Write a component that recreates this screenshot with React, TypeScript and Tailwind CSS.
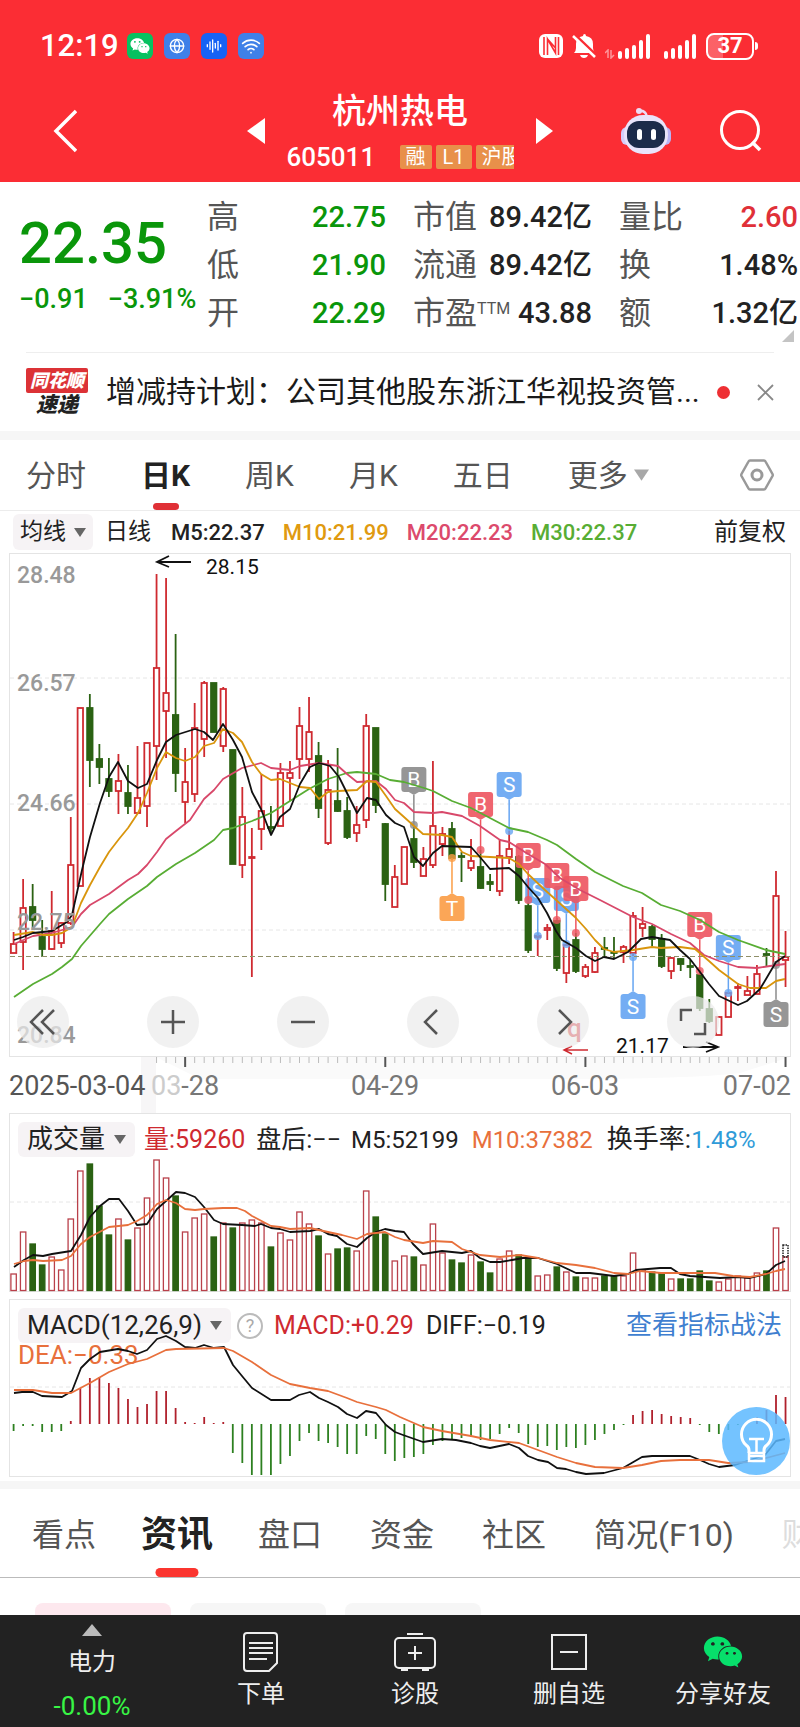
import { AudioLines, Globe, Wifi } from 'lucide-react';
import { FaWeixin } from 'react-icons/fa';
import { clsx } from 'clsx';

type Point = [number, number];
// kind, high, body top, body bottom, low
type Candle = ['u' | 'd', number, number, number, number];

const STEP = 9.53;
const xAt = (i: number) => 13.6 + STEP * i;
const toPath = (points: Point[]) => 'M' + points.map((p) => p.join(' ')).join('L');

const CANDLES: Candle[] = [
    ['u', 379, 391, 400, 400], ['u', 326, 355, 389, 417], ['d', 331, 354, 367, 375], ['d', 367, 384, 396, 404],
    ['u', 338, 378, 396, 397], ['u', 369, 370, 390, 395], ['u', 264, 312, 370, 372], ['u', 155, 155, 333, 333],
    ['d', 141, 155, 207, 234], ['d', 191, 206, 214, 231], ['d', 205, 226, 238, 244], ['u', 201, 228, 238, 261],
    ['d', 212, 240, 253, 261], ['u', 193, 245, 260, 260], ['u', 190, 190, 253, 274], ['u', 21, 115, 193, 227],
    ['u', 25, 140, 158, 205], ['d', 81, 162, 220, 239], ['u', 195, 229, 249, 270], ['u', 150, 175, 241, 249],
    ['u', 128, 130, 186, 204], ['d', 130, 130, 179, 179], ['u', 134, 136, 193, 199], ['d', 197, 197, 311, 311],
    ['u', 234, 264, 312, 325], ['u', 275, 304, 305, 424], ['u', 221, 258, 276, 297], ['d', 253, 274, 275, 282],
    ['u', 210, 220, 273, 273], ['u', 208, 220, 225, 248], ['u', 154, 173, 206, 226], ['u', 144, 179, 206, 219],
    ['d', 189, 203, 255, 265], ['u', 207, 237, 290, 292], ['d', 195, 248, 258, 259], ['d', 244, 258, 284, 286],
    ['u', 253, 272, 280, 289], ['u', 161, 173, 267, 275], ['d', 175, 175, 252, 260], ['d', 270, 271, 331, 348],
    ['u', 312, 324, 354, 354], ['u', 294, 294, 331, 331], ['d', 274, 286, 309, 315], ['u', 294, 306, 323, 323],
    ['u', 208, 273, 312, 315], ['u', 274, 281, 291, 303], ['d', 269, 276, 305, 307], ['d', 299, 303, 304, 329],
    ['u', 286, 308, 315, 318], ['d', 297, 314, 335, 336], ['d', 321, 329, 331, 338], ['u', 287, 303, 338, 343],
    ['u', 278, 296, 304, 311], ['d', 302, 304, 347, 351], ['d', 347, 353, 397, 400], ['u', 380, 383, 384, 403],
    ['u', 371, 375, 377, 387], ['d', 365, 368, 415, 418], ['u', 391, 392, 420, 430], ['d', 380, 387, 418, 420],
    ['u', 411, 414, 423, 425], ['u', 394, 400, 419, 420], ['d', 384, 395, 396, 404], ['d', 384, 399, 400, 405],
    ['u', 392, 394, 399, 410], ['u', 359, 363, 400, 403], ['u', 354, 371, 375, 384], ['d', 372, 374, 386, 393],
    ['d', 381, 386, 413, 415], ['u', 404, 405, 418, 426], ['d', 405, 406, 411, 418], ['d', 407, 413, 414, 425],
    ['d', 417, 422, 455, 458], ['d', 446, 456, 468, 470], ['u', 463, 464, 482, 482], ['u', 439, 440, 464, 464],
    ['u', 430, 434, 435, 448], ['u', 423, 438, 442, 442], ['u', 412, 421, 441, 441], ['d', 395, 401, 402, 413],
    ['u', 318, 343, 412, 412], ['u', 378, 404, 407, 434],
];

const MA5: Point[] = [
    [14, 387], [23, 384], [33, 380], [52, 378], [62, 372], [67, 369], [72, 362], [82, 317], [90, 284], [100, 250],
    [109, 224], [118, 209], [128, 228], [138, 235], [147, 231], [157, 207], [166, 189], [176, 182], [195, 176],
    [204, 179], [213, 187], [223, 171], [233, 187], [242, 204], [252, 239], [261, 256], [271, 282], [280, 264],
    [290, 256], [300, 231], [310, 214], [319, 210], [330, 213], [339, 224], [357, 260], [367, 245], [376, 247],
    [386, 262], [395, 270], [404, 274], [414, 304], [423, 313], [433, 300], [442, 293], [471, 294], [480, 304],
    [490, 316], [509, 315], [519, 323], [528, 334], [538, 345], [547, 360], [556, 378], [562, 387], [576, 395],
    [586, 403], [595, 408], [604, 404], [614, 406], [628, 399], [641, 386], [652, 384], [670, 387], [680, 397],
    [690, 406], [700, 419], [709, 431], [719, 443], [738, 452], [747, 448], [760, 436], [766, 426], [776, 409], [785, 403],
];
const MA10: Point[] = [
    [14, 382], [33, 379], [43, 382], [52, 382], [62, 380], [72, 374], [81, 350], [90, 332], [100, 314], [109, 299],
    [119, 286], [128, 275], [138, 260], [147, 240], [157, 215], [166, 199], [176, 205], [185, 208], [195, 204],
    [204, 193], [214, 190], [223, 176], [233, 180], [242, 189], [252, 209], [261, 221], [271, 227], [280, 226],
    [290, 230], [300, 234], [310, 235], [319, 246], [328, 239], [338, 238], [357, 237], [367, 228], [376, 229],
    [386, 243], [395, 256], [404, 264], [414, 273], [423, 281], [442, 282], [452, 284], [462, 299], [471, 303],
    [509, 305], [519, 311], [528, 321], [545, 337], [555, 346], [576, 365], [586, 376], [595, 387], [604, 396],
    [614, 399], [633, 397], [652, 394], [661, 395], [680, 394], [695, 396], [709, 408], [719, 417], [738, 431],
    [750, 435], [766, 435], [776, 428], [785, 426],
];
const MA20: Point[] = [
    [14, 391], [33, 383], [52, 380], [72, 374], [81, 361], [90, 352], [109, 341], [128, 327], [138, 321], [147, 312],
    [157, 299], [166, 286], [176, 278], [190, 267], [204, 246], [214, 237], [223, 226], [242, 215], [261, 210],
    [271, 215], [290, 217], [300, 213], [319, 210], [338, 213], [347, 221], [357, 229], [376, 228], [386, 236],
    [395, 247], [404, 250], [414, 259], [433, 260], [442, 259], [462, 263], [480, 273], [500, 287], [509, 289],
    [528, 301], [545, 311], [560, 325], [580, 337], [600, 347], [633, 364], [652, 371], [671, 381], [690, 390],
    [704, 402], [719, 408], [738, 414], [757, 415], [770, 413], [785, 411],
];
const MA30: Point[] = [
    [14, 444], [33, 431], [52, 421], [62, 414], [72, 406], [81, 393], [100, 371], [109, 361], [128, 346], [147, 333],
    [157, 324], [176, 311], [195, 300], [214, 287], [223, 277], [233, 275], [252, 268], [271, 260], [290, 248],
    [309, 236], [328, 226], [347, 220], [357, 219], [376, 221], [390, 227], [404, 229], [424, 235], [433, 238],
    [452, 248], [471, 255], [490, 265], [509, 275], [528, 279], [547, 287], [557, 292], [576, 306], [595, 319],
    [623, 333], [642, 340], [661, 352], [680, 358], [700, 367], [719, 379], [738, 387], [766, 397], [785, 401],
];

const VOLUMES = [
    17, 59, 47, 26, 34, 21, 72, 120, 127, 85, 56, 72, 51, 63, 93, 131, 113, 95, 59, 73, 77, 54, 68, 63, 68, 71, 68, 44,
    58, 51, 79, 67, 55, 37, 42, 43, 40, 100, 74, 57, 30, 35, 34, 26, 67, 38, 31, 28, 36, 29, 18, 32, 40, 36, 32, 15, 16,
    24, 19, 14, 13, 13, 15, 15, 15, 38, 21, 19, 18, 12, 12, 12, 20, 10, 9, 12, 15, 13, 18, 20, 63, 34,
];
const VOL5: Point[] = [
    [14, 154], [24, 147], [33, 142], [43, 143], [52, 141], [71, 138], [81, 122], [90, 104], [100, 93], [109, 86],
    [119, 86], [128, 98], [137, 112], [147, 111], [157, 96], [166, 88], [176, 79], [185, 80], [195, 84], [204, 94],
    [214, 107], [223, 111], [242, 112], [255, 113], [261, 111], [271, 115], [280, 116], [290, 119], [310, 118],
    [319, 116], [328, 121], [337, 123], [347, 131], [357, 134], [367, 125], [376, 119], [385, 116], [395, 118],
    [404, 119], [413, 131], [423, 141], [442, 138], [462, 140], [471, 138], [480, 145], [490, 149], [500, 149],
    [512, 147], [523, 145], [538, 145], [557, 151], [576, 160], [590, 160], [614, 163], [628, 161], [636, 157],
    [660, 155], [671, 155], [680, 161], [690, 163], [720, 165], [738, 164], [750, 165], [766, 161], [776, 152], [785, 148],
];
const VOL10: Point[] = [
    [14, 151], [24, 148], [33, 147], [43, 148], [62, 147], [71, 143], [81, 131], [90, 124], [109, 114], [128, 112],
    [137, 108], [147, 102], [157, 91], [166, 87], [176, 90], [185, 96], [195, 97], [204, 96], [223, 95], [237, 95],
    [245, 98], [252, 103], [271, 113], [280, 114], [290, 116], [310, 115], [328, 119], [342, 122], [357, 126],
    [367, 121], [385, 119], [395, 124], [404, 127], [423, 130], [433, 128], [452, 129], [462, 136], [480, 142],
    [500, 144], [520, 142], [538, 145], [557, 150], [576, 152], [595, 155], [614, 160], [628, 161], [640, 158],
    [661, 160], [715, 160], [733, 163], [750, 164], [766, 161], [776, 158], [785, 156],
];

const MACD = [
    -7, -2, -2, -8, -8, -7, 3, 36, 46, 47, 41, 36, 25, 17, 20, 33, 33, 16, 2, 1, 7, 1, 2, -29, -39, -51, -51, -51, -40,
    -32, -17, -9, -17, -19, -23, -30, -30, -12, -15, -30, -37, -34, -33, -30, -21, -17, -15, -14, -13, -16, -15, -10, -4,
    -9, -20, -23, -22, -26, -23, -24, -21, -16, -10, -6, -1, 9, 13, 14, 10, 8, 7, 6, -1, -8, -10, -6, -1, 2, 7, 14, 29, 27,
];
const DIFF: Point[] = [
    [14, 94], [22, 93], [33, 93], [42, 97], [62, 98], [72, 92], [81, 69], [90, 60], [100, 53], [118, 50], [128, 52],
    [137, 55], [147, 51], [157, 40], [166, 37], [176, 42], [185, 48], [195, 49], [204, 46], [214, 49], [224, 48],
    [233, 66], [242, 77], [252, 89], [271, 101], [290, 101], [299, 96], [310, 93], [319, 99], [328, 103], [338, 108],
    [347, 115], [357, 119], [366, 112], [376, 114], [386, 126], [395, 133], [403, 136], [423, 143], [442, 140],
    [456, 141], [471, 144], [480, 147], [490, 149], [509, 145], [519, 149], [528, 157], [538, 161], [548, 163],
    [557, 169], [566, 170], [576, 173], [586, 175], [604, 174], [623, 169], [642, 158], [652, 157], [661, 157],
    [690, 157], [700, 161], [709, 165], [719, 168], [735, 166], [750, 161], [765, 156], [776, 142], [785, 140],
];
const DEA: Point[] = [
    [14, 91], [33, 91], [52, 94], [71, 94], [90, 84], [109, 73], [128, 65], [147, 60], [166, 51], [176, 50], [224, 49],
    [233, 52], [252, 63], [271, 76], [290, 85], [310, 89], [328, 92], [347, 99], [357, 103], [376, 108], [386, 111],
    [400, 118], [423, 128], [442, 132], [471, 137], [490, 141], [519, 144], [538, 151], [557, 158], [576, 164],
    [595, 168], [623, 169], [642, 166], [661, 162], [680, 161], [709, 161], [728, 164], [750, 163], [770, 158], [785, 154],
];

// Trade markers: candle index, letter, colour, top of the flag, y of the dot
const MARKERS: [number, string, string, number, number][] = [
    [42, 'B', '#8b8b8b', 214, 272],
    [46, 'T', '#fb9d45', 343, 305],
    [49, 'B', '#ee5560', 239, 297],
    [52, 'S', '#66a5f2', 219, 278],
    [55, 'S', '#66a5f2', 325, 383],
    [54, 'B', '#ee5560', 290, 347],
    [58, 'S', '#66a5f2', 333, 391],
    [57, 'B', '#ee5560', 310, 367],
    [59, 'B', '#ee5560', 323, 380],
    [65, 'S', '#66a5f2', 441, 404],
    [72, 'B', '#ee5560', 359, 418],
    [75, 'S', '#66a5f2', 382, 440],
    [80, 'S', '#8b8b8b', 449, 412],
];

const RED = '#cf2a30';
const GREEN = '#2b6213';

function CaretDown({ className }: { className?: string }) {
    return (
        <svg viewBox="0 0 12 9" className={className} aria-hidden="true">
            <path d="M0 0h12L6 9z" fill="currentColor" />
        </svg>
    );
}

function IndicatorSelect({ label, className }: { label: string; className?: string }) {
    return (
        <label className={clsx('flex items-center rounded-md bg-[#f6f3f5] text-[#222]', className)}>
            <select aria-label={label} className="appearance-none bg-transparent outline-none">
                <option>{label}</option>
            </select>
            <CaretDown className="ml-2 h-[9px] w-3 text-[#666]" />
        </label>
    );
}

function Signal() {
    return (
        <svg viewBox="0 0 32 26" className="h-[26px] w-8" aria-hidden="true">
            {[8, 11, 14, 19, 25].map((h, i) => (
                <rect key={h} x={i * 7} y={26 - h} width="4" height={h} rx="2" fill="#fff" />
            ))}
        </svg>
    );
}

function Header() {
    return (
        <header className="h-[182px] bg-[#fb2d34] text-white">
            <div className="flex items-center pt-[28px] pr-[42px] pl-[40px]">
                <span className="text-[31px] leading-9 font-medium">12:19</span>
                <div className="ml-2 flex gap-[11px]">
                    <span className="flex size-[26px] items-center justify-center rounded-md bg-[#07c160]">
                        <FaWeixin className="size-5" />
                    </span>
                    <span className="flex size-[26px] items-center justify-center rounded-md bg-[#3f80e8]">
                        <Globe className="size-4" />
                    </span>
                    <span className="flex size-[26px] items-center justify-center rounded-md bg-[#1662f5]">
                        <AudioLines className="size-4" />
                    </span>
                    <span className="flex size-[26px] items-center justify-center rounded-md bg-[#3f80e8]">
                        <Wifi className="size-5" />
                    </span>
                </div>
                <div className="ml-auto flex items-center">
                    <svg viewBox="0 0 24 24" className="size-6" aria-hidden="true">
                        <rect width="24" height="24" rx="6" fill="#fff" />
                        <path d="M5 3v18M8.500 21V5l8 14V3M19.500 3v18M8.500 5l8 9" stroke="#fb2d34" strokeWidth="1.600" fill="none" />
                    </svg>
                    <svg viewBox="0 0 26 26" className="ml-2 size-[26px]" aria-hidden="true">
                        <path d="M3 20q2-2 2-5v-4q0-7 7-8 0-2 1.500-2T15 3q7 1 7 8v4q0 3 2 5zM9 22h8q-1 3-4 3t-4-3z" fill="#fff" />
                        <path d="M3 1l22 21" stroke="#fb2d34" strokeWidth="3" />
                        <path d="M2 3l22 21" stroke="#fff" strokeWidth="2.500" />
                    </svg>
                    <svg viewBox="0 0 10 10" className="mt-4 mr-[3px] ml-2 size-[10px] opacity-50" aria-hidden="true">
                        <path d="M3 9V1L0 4M6 1v8l3-3" stroke="#fff" strokeWidth="1.500" fill="none" />
                    </svg>
                    <Signal />
                    <span className="ml-[14px]">
                        <Signal />
                    </span>
                    <span className="ml-[10px] flex h-[27px] w-12 items-center justify-center rounded-lg border-2 border-white bg-linear-to-r from-white/25 from-35% to-transparent to-35% text-[22px] leading-none font-bold">
                        37
                    </span>
                    <span className="ml-px h-2 w-[3px] rounded-r bg-white" />
                </div>
            </div>

            <div className="mt-[27px] grid grid-cols-[1fr_auto_1fr] items-center">
                <button type="button" aria-label="返回" className="ml-[53px] w-fit">
                    <svg viewBox="0 0 24 44" className="h-11 w-6">
                        <path d="M23 2L3 22l20 20" fill="none" stroke="#fff" strokeWidth="3.500" />
                    </svg>
                </button>
                <div className="flex items-center gap-[22px]">
                    <button type="button" aria-label="上一只">
                        <svg viewBox="0 0 18 26" className="h-[26px] w-[18px]">
                            <path d="M18 0v26L0 13z" fill="#fff" />
                        </svg>
                    </button>
                    <div className="w-[227px]">
                        <h1 className="text-center text-[34px] leading-10 font-medium">杭州热电</h1>
                        <div className="mt-3 flex h-7 items-center justify-between overflow-hidden">
                            <span className="text-[26px] leading-7 font-medium">605011</span>
                            <div className="flex w-[114px] gap-1 overflow-hidden text-[20px] leading-6 whitespace-nowrap">
                                <span className="shrink-0 rounded-xs bg-[#e8904a] px-[6px]">融</span>
                                <span className="shrink-0 rounded-xs bg-[#e8904a] px-[7px]">L1</span>
                                <span className="shrink-0 rounded-xs bg-[#e8904a] px-[6px]">沪股通</span>
                            </div>
                        </div>
                    </div>
                    <button type="button" aria-label="下一只">
                        <svg viewBox="0 0 18 26" className="h-[26px] w-[18px]">
                            <path d="M0 0v26l17-13z" fill="#fff" />
                        </svg>
                    </button>
                </div>
                <div className="mr-[38px] flex items-center justify-end gap-[48px]">
                    <button type="button" aria-label="智能助手">
                        <svg viewBox="0 0 52 48" className="h-12 w-[52px]">
                            <path d="M19 4q7-1 8 6" fill="none" stroke="#eddcf5" strokeWidth="2.500" />
                            <circle cx="19" cy="4" r="3" fill="#eddcf5" />
                            <rect x="1" y="20" width="12" height="18" rx="6" fill="#d5cdfa" />
                            <rect x="39" y="20" width="12" height="18" rx="6" fill="#b9b4f5" />
                            <rect x="4" y="8" width="44" height="39" rx="19" fill="#e9e4fb" />
                            <rect x="7" y="14" width="38" height="27" rx="12" fill="#1c2b4a" />
                            <rect x="17" y="22" width="5" height="11" rx="2.500" fill="#fff" />
                            <rect x="31" y="22" width="5" height="11" rx="2.500" fill="#fff" />
                        </svg>
                    </button>
                    <button type="button" aria-label="搜索">
                        <svg viewBox="0 0 42 42" className="size-[42px]">
                            <circle cx="20" cy="20" r="18.500" fill="none" stroke="#fff" strokeWidth="3" />
                            <path d="M32 32l8 8" stroke="#fff" strokeWidth="3.500" />
                        </svg>
                    </button>
                </div>
            </div>
        </header>
    );
}

function Stat({ label, value, tone = 'text-[#222]', sup }: { label: string; value: string; tone?: string; sup?: string }) {
    return (
        <div className="flex items-center justify-between">
            <dt className="flex text-[32px] text-[#555]">
                {label}
                {sup && <sup className="top-0 mt-[10px] text-[16px] leading-5">{sup}</sup>}
            </dt>
            <dd className={clsx('text-[29px] font-medium', tone)}>{value}</dd>
        </div>
    );
}

function Quote() {
    return (
        <section className="relative flex h-[170px] pt-[11px] pr-[2px] pl-[19px]">
            <div className="w-[188px] shrink-0 whitespace-nowrap text-[#0a960a]">
                <div className="mt-[18px] text-[58px] leading-[64px] font-medium">22.35</div>
                <div className="mt-[6px] flex gap-5 text-[27px] leading-9 font-medium">
                    <span>−0.91</span>
                    <span>−3.91%</span>
                </div>
            </div>
            <dl className="grid flex-1 grid-cols-3 content-start gap-x-[27px] leading-[48px] whitespace-nowrap">
                <Stat label="高" value="22.75" tone="text-[#0a960a]" />
                <Stat label="市值" value="89.42亿" />
                <Stat label="量比" value="2.60" tone="text-[#e03038]" />
                <Stat label="低" value="21.90" tone="text-[#0a960a]" />
                <Stat label="流通" value="89.42亿" />
                <Stat label="换" value="1.48%" />
                <Stat label="开" value="22.29" tone="text-[#0a960a]" />
                <Stat label="市盈" sup="TTM" value="43.88" />
                <Stat label="额" value="1.32亿" />
            </dl>
            <svg viewBox="0 0 12 12" className="absolute right-[6px] bottom-[10px] size-3" aria-hidden="true">
                <path d="M12 0v12H0z" fill="#c4c4c4" />
            </svg>
        </section>
    );
}

function News() {
    return (
        <section className="mr-[26px] ml-[26px] flex h-[79px] items-center border-t border-[#eee]">
            <div className="w-[62px] shrink-0 text-center font-black italic">
                <div className="rounded-xs bg-[#dc3236] text-[18px] leading-[25px] text-white">同花顺</div>
                <div className="text-[21px] leading-6 text-[#222]">速递</div>
            </div>
            <a href="#news" className="ml-[18px] flex-1 truncate text-[30px] leading-10 text-[#1a1a1a]">
                增减持计划：公司其他股东浙江华视投资管...
            </a>
            <span className="size-[13px] shrink-0 rounded-full bg-[#ee2f33]" />
            <button type="button" aria-label="关闭" className="ml-[27px]">
                <svg viewBox="0 0 17 17" className="size-[17px]">
                    <path d="M1 1l15 15M16 1L1 16" stroke="#888" strokeWidth="1.800" />
                </svg>
            </button>
        </section>
    );
}

function PeriodTabs() {
    return (
        <nav className="flex h-[71px] items-center border-b border-[#ececec] pr-[26px] pl-[26px] text-[30px] text-[#555]">
            <div className="flex h-full gap-[55px]">
                {['分时', '日K', '周K', '月K', '五日'].map((tab) => (
                    <button key={tab} type="button" className={clsx('relative', tab === '日K' && 'font-bold text-[#222]')}>
                        {tab}
                        {tab === '日K' && (
                            <span className="absolute bottom-0 left-1/2 h-[7px] w-[26px] -translate-x-1/2 rounded bg-[#e03036]" />
                        )}
                    </button>
                ))}
                <button type="button" className="flex items-center gap-[6px]">
                    更多
                    <CaretDown className="h-3 w-[15px] text-[#a8a8a8]" />
                </button>
            </div>
            <button type="button" aria-label="图表设置" className="ml-auto">
                <svg viewBox="0 0 34 32" className="h-8 w-[34px]" fill="none" stroke="#999" strokeWidth="2.500">
                    <path d="M10 1.500h14q1 0 1.500 1l7 12.500q.5 1 0 2l-7 12.500q-.5 1-1.500 1H10q-1 0-1.500-1L1.500 17q-.5-1 0-2l7-12.500q.5-1 1.500-1z" />
                    <circle cx="17" cy="16" r="5" strokeWidth="3" />
                </svg>
            </button>
        </nav>
    );
}

function MaBar() {
    return (
        <div className="flex h-[42px] items-center pr-[14px] pl-[13px] text-[22px] font-medium whitespace-nowrap">
            <IndicatorSelect label="均线" className="h-9 px-[7px] text-[23px] font-normal" />
            <span className="ml-3 text-[23px] font-normal">日线</span>
            <div className="ml-5 flex gap-[18px]">
                <span>M5:22.37</span>
                <span className="text-[#e09a10]">M10:21.99</span>
                <span className="text-[#dc4a6c]">M20:22.23</span>
                <span className="text-[#58ad34]">M30:22.37</span>
            </div>
            <span className="ml-auto text-[24px] font-normal">前复权</span>
        </div>
    );
}

function Line({ points, color }: { points: Point[]; color: string }) {
    return <path d={toPath(points)} fill="none" stroke={color} strokeWidth="1.800" strokeLinejoin="round" />;
}

function Marker({ data }: { data: (typeof MARKERS)[number] }) {
    const [index, letter, color, top, dot] = data;
    const x = xAt(index);
    const below = top > dot;
    const tip = below ? top - 3 : top + 28;
    const edge = below ? top : top + 25;
    return (
        <g>
            <path d={`M${x} ${tip}V${dot}`} stroke={color} strokeWidth="1.500" />
            <circle cx={x} cy={dot} r="4" fill={color} opacity="0.8" />
            <g opacity="0.9">
                <rect x={x - 12.5} y={top} width="25" height="25" rx="3" fill={color} />
                <path d={`M${x - 5} ${edge}L${x} ${tip}L${x + 5} ${edge}z`} fill={color} />
            </g>
            <text x={x} y={top + 20} textAnchor="middle" fontSize="21" fill="#fff">
                {letter}
            </text>
        </g>
    );
}

const GRID = [125, 251, 377];
const PRICES: [string, number][] = [['28.48', 30], ['26.57', 138], ['24.66', 258], ['22.75', 377], ['20.84', 490]];

function PriceChart() {
    const buttons = [
        { label: '最早', d: 'M26 14L14 26l12 12M37 14L25 26l12 12' },
        { label: '放大', d: 'M14 26h24M26 14v24' },
        { label: '缩小', d: 'M14 26h24' },
        { label: '左移', d: 'M30 14L18 26l12 12' },
        { label: '右移', d: 'M22 14l12 12-12 12' },
        { label: '全屏', d: 'M25 14H14v11M27 38h11V27' },
    ];
    return (
        <section className="relative">
            <svg viewBox="0 0 800 560" className="block w-full">
                <rect x="9.500" y="0.500" width="781" height="503" fill="#fff" stroke="#e4e4e4" />
                {GRID.map((y) => (
                    <path key={y} d={`M10 ${y}H790`} stroke="#e6e6e6" strokeDasharray="4 3" />
                ))}
                <rect x="141" y="504" width="15" height="56" fill="#f7f6f7" />
                <path d="M156 504H790L740 520Q690 526 560 526H200z" fill="#fafafa" />

                {CANDLES.map(([kind, high, top, bottom, low], i) => {
                    const x = xAt(i);
                    const color = kind === 'u' ? RED : GREEN;
                    return (
                        <g key={i} stroke={color} strokeWidth="1.800">
                            {high < top && <path d={`M${x} ${high}V${top}`} />}
                            {low > bottom && <path d={`M${x} ${bottom}V${low}`} />}
                            <rect x={x - 2.7} y={top} width="5.4" height={Math.max(bottom - top, 1)} fill={kind === 'u' ? '#fff' : color} />
                        </g>
                    );
                })}
                {MARKERS.map((m, i) => (
                    <Marker key={i} data={m} />
                ))}
                <path d="M10 403.500H790" stroke="#8f8f68" strokeDasharray="5 3" />
                <Line points={MA30} color="#58ad34" />
                <Line points={MA20} color="#d8486a" />
                <Line points={MA10} color="#d9950c" />
                <Line points={MA5} color="#111" />

                {PRICES.map(([price, y]) => (
                    <text key={price} x="17" y={y} fontSize="23" fontWeight="500" fill="#999">
                        {price}
                    </text>
                ))}
                <path d="M191 9H157M169 3L157 9l12 5" fill="none" stroke="#111" strokeWidth="1.800" />
                <text x="206" y="21" fontSize="21" fill="#111">28.15</text>
                <text x="616" y="500" fontSize="21" fill="#111">21.17</text>
                <path d="M683 494h35M706 489l12 5-12 5" fill="none" stroke="#111" strokeWidth="1.800" />
                <text x="567" y="484" fontSize="26" fontWeight="500" fill="#d9262c">q</text>
                <path d="M588 497h-24M572 493l-8 4 8 4" fill="none" stroke="#cf2a30" strokeWidth="1.500" />

                {CANDLES.map((_, i) => {
                    const major = i === 18 || i === 39 || i === 60 || i === 81;
                    return i > 14 && (
                        <path key={i} d={`M${xAt(i)} 504V${major ? 514 : 510}`} stroke={major ? '#555' : '#bbb'} strokeWidth={major ? 2 : 1} />
                    );
                })}
                <g fontSize="27" fill="#777">
                    <text x="9" y="542" fill="#555">2025-03-04</text>
                    <text x="151" y="542"><tspan fill="#ccc">03</tspan>-28</text>
                    <text x="385" y="542" textAnchor="middle">04-29</text>
                    <text x="585" y="542" textAnchor="middle">06-03</text>
                    <text x="791" y="542" textAnchor="end">07-02</text>
                </g>
            </svg>
            <div className="absolute top-[443px] left-[17px] flex gap-[78px]">
                {buttons.map(({ label, d }) => (
                    <button key={label} type="button" aria-label={label} className="size-[52px] rounded-full bg-[#ebebeb]/70">
                        <svg viewBox="0 0 52 52" className="size-full">
                            <path d={d} fill="none" stroke="#555" strokeWidth="2.500" />
                        </svg>
                    </button>
                ))}
            </div>
        </section>
    );
}

function VolumeChart() {
    return (
        <section className="grid">
            <svg viewBox="0 0 800 186" className="col-start-1 row-start-1 block w-full">
                <rect x="9.500" y="0.500" width="781" height="178" fill="#fff" stroke="#e4e4e4" />
                <path d="M10 89H790" stroke="#e6e6e6" strokeDasharray="4 3" />
                {VOLUMES.map((v, i) => {
                    const up = CANDLES[i][0] === 'u';
                    return (
                        <rect
                            key={i}
                            x={xAt(i) - 2.7}
                            y={178 - v}
                            width="5.4"
                            height={v - 0.5}
                            fill={up ? '#fff' : GREEN}
                            stroke={up ? '#b9404a' : GREEN}
                            strokeWidth="1.300"
                        />
                    );
                })}
                <rect x="783" y="132" width="5" height="12" fill="none" stroke="#222" strokeWidth="1.500" strokeDasharray="1.500 1" />
                <Line points={VOL5} color="#111" />
                <Line points={VOL10} color="#e8703c" />
            </svg>
            <div className="col-start-1 row-start-1 mt-[9px] ml-[18px] flex h-[35px] items-center self-start text-[24px] whitespace-nowrap">
                <IndicatorSelect label="成交量" className="h-full px-[9px] text-[26px]" />
                <span className="ml-[9px] text-[25px] text-[#cf2a30]">量:59260</span>
                <span className="ml-[11px] text-[25px]">盘后:−−</span>
                <span className="ml-[10px]">M5:52199</span>
                <span className="ml-[13px] text-[#e8703c]">M10:37382</span>
                <span className="ml-[14px] text-[26px]">换手率:</span>
                <span className="text-[#2f9bd8]">1.48%</span>
            </div>
        </section>
    );
}

function MacdChart() {
    return (
        <section className="relative grid">
            <svg viewBox="0 0 800 182" className="col-start-1 row-start-1 block w-full">
                <rect x="9.500" y="0.500" width="781" height="177" fill="#fff" stroke="#e4e4e4" />
                <path d="M10 88H790" stroke="#e6e6e6" strokeDasharray="4 3" />
            </svg>
            <div className="col-start-1 row-start-1 mt-[9px] mr-[18px] ml-[18px] flex h-[35px] items-center self-start text-[25px] whitespace-nowrap text-[#222]">
                <IndicatorSelect label="MACD(12,26,9)" className="h-full px-[9px] text-[26px]" />
                <button type="button" aria-label="指标说明" className="ml-[6px] size-[26px] rounded-full border-2 border-[#bbb] text-[18px] leading-none text-[#aaa]">
                    ?
                </button>
                <span className="ml-[11px]  text-[#cf2a30]">MACD:+0.29</span>
                <span className="ml-3">DIFF:−0.19</span>
                <a href="#strategy" className="ml-auto text-[26px] text-[#3f7fd0]">查看指标战法</a>
            </div>
            <span className="col-start-1 row-start-1 mt-[42px] ml-[18px] self-start text-[26px] leading-7 text-[#e8703c]">DEA:−0.33</span>
            <svg viewBox="0 0 800 182" className="pointer-events-none col-start-1 row-start-1 block w-full">
                {MACD.map((v, i) => (
                    <path key={i} d={`M${xAt(i)} 125v${-v}`} stroke={v > 0 ? '#b0202c' : '#2d8020'} strokeWidth="1.800" />
                ))}
                <Line points={DIFF} color="#111" />
                <Line points={DEA} color="#e8703c" />
            </svg>
            <button type="button" aria-label="提示" className="absolute right-[10px] bottom-[6px] size-[68px] rounded-full bg-[#5cb9ff]/85">
                <svg viewBox="0 0 68 68" className="size-full" fill="none" stroke="#fff" strokeWidth="3">
                    <path d="M27 46v-3q0-3-3-5a15 15 0 1 1 21 0q-3 2-3 5v3" />
                    <path d="M27 46h15v8H27zM27 49h15M34.500 46V33M27 32h15" strokeWidth="2.500" />
                </svg>
            </button>
        </section>
    );
}

function InfoTabs() {
    return (
        <nav className="flex h-[89px] gap-[48px] overflow-hidden border-b border-[#bbb] pl-[32px] text-[32px] whitespace-nowrap text-[#555]">
            {['看点', '资讯', '盘口', '资金', '社区', '简况(F10)', '财务'].map((tab) => (
                <button
                    key={tab}
                    type="button"
                    className={clsx('relative shrink-0 pt-[3px]', tab === '资讯' && '-mx-[3px] text-[36px] font-bold text-[#222]', tab === '财务' && 'text-[#ddd]')}
                >
                    {tab}
                    {tab === '资讯' && (
                        <span className="absolute bottom-0 left-1/2 h-[9px] w-[43px] -translate-x-1/2 rounded-full bg-[#fb352f]" />
                    )}
                </button>
            ))}
        </nav>
    );
}

const ACTIONS = [
    {
        label: '下单',
        icon: (
            <svg viewBox="0 0 40 40" className="size-10" fill="none" stroke="#eee" strokeWidth="2">
                <path d="M6 1h27q3 0 3 3v27l-8 8H6q-3 0-3-3V4q0-3 3-3z" />
                <path d="M8 11h24M8 16h24M8 21h24M8 27h18" />
            </svg>
        ),
    },
    {
        label: '诊股',
        icon: (
            <svg viewBox="0 0 44 40" className="h-10 w-11" fill="none" stroke="#eee" strokeWidth="2">
                <rect x="2" y="6" width="40" height="30" rx="4" />
                <path d="M14 2h16M8 38h7M29 38h7M15 21h14M22 14v14" />
            </svg>
        ),
    },
    {
        label: '删自选',
        icon: (
            <svg viewBox="0 0 40 40" className="size-10" fill="none" stroke="#eee" strokeWidth="2">
                <path d="M3 3h34v34H3zM11 20h18" />
            </svg>
        ),
    },
    { label: '分享好友', icon: <FaWeixin className="size-10 text-[#07df6b]" /> },
];

function BottomBar() {
    return (
        <footer className="flex h-28 bg-[#222] text-[24px] leading-8 text-[#eee]">
            <button type="button" className="flex w-[23%] flex-col items-center pt-[9px]">
                <svg viewBox="0 0 20 12" className="h-3 w-5" aria-hidden="true">
                    <path d="M10 0l10 12H0z" fill="#bbb" />
                </svg>
                <span className="mt-[10px]">电力</span>
                <span className="mt-3 text-[26px] text-[#38f545]">-0.00%</span>
            </button>
            <div className="grid flex-1 grid-cols-4">
                {ACTIONS.map(({ label, icon }) => (
                    <button key={label} type="button" className="flex flex-col items-center pt-[17px]">
                        {icon}
                        <span className="mt-[6px]">{label}</span>
                    </button>
                ))}
            </div>
        </footer>
    );
}

export default function App() {
    return (
        <div className="w-full overflow-hidden bg-white font-['Roboto','Noto_Sans_CJK_SC',sans-serif] text-[#222]">
            <Header />
            <Quote />
            <News />
            <div className="h-[9px] bg-[#f6f6f6]" />
            <PeriodTabs />
            <MaBar />
            <PriceChart />
            <VolumeChart />
            <MacdChart />
            <div className="h-2 bg-[#f6f6f6]" />
            <InfoTabs />
            <div className="flex h-[37px] gap-[19px] overflow-hidden pt-[25px] pl-[35px]">
                <div className="h-10 w-[136px] rounded-lg bg-[#fde8ee]" />
                <div className="h-10 w-[136px] rounded-lg bg-[#f6f6f6]" />
                <div className="h-10 w-[136px] rounded-lg bg-[#f6f6f6]" />
            </div>
            <BottomBar />
        </div>
    );
}
